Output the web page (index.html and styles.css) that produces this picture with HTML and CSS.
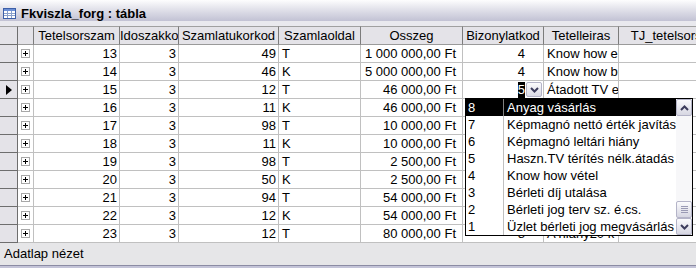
FILE: index.html
```html
<!DOCTYPE html>
<html lang="hu">
<head>
    <meta charset="UTF-8">
    <title>Fkviszla_forg : tábla</title>
    <link rel="stylesheet" href="styles.css">
</head>
<body>
    <div class="window">
        <div class="titlebar">
            <svg class="table-icon" width="13" height="11" viewBox="0 0 13 11">
                <rect x="0.5" y="0.5" width="12" height="10" fill="#fff" stroke="#3d5fa8"/>
                <rect x="1" y="1" width="11" height="2" fill="#6b8fd6"/>
                <path d="M1 5.5H12M1 7.5H12M4.5 3V10M8.5 3V10" stroke="#8aa0cc" stroke-width="1"/>
            </svg>
            <span class="title">Fkviszla_forg : tábla</span>
        </div>
        <div class="frame-gap"></div>

        <div class="sheet">
            <div class="row head">
                <div class="cell sel"></div>
                <div class="cell"></div>
                <div class="cell">Tetelsorszam</div>
                <div class="cell">Idoszakkod</div>
                <div class="cell">Szamlatukorkod</div>
                <div class="cell">Szamlaoldal</div>
                <div class="cell">Osszeg</div>
                <div class="cell">Bizonylatkod</div>
                <div class="cell">Tetelleiras</div>
                <div class="cell">TJ_tetelsorszam</div>
            </div>

            <div class="row">
                <div class="cell sel"></div>
                <div class="cell exp"><span class="plus"></span></div>
                <div class="cell num">13</div>
                <div class="cell num">3</div>
                <div class="cell num">49</div>
                <div class="cell txt">T</div>
                <div class="cell money">1 000 000,00 Ft</div>
                <div class="cell code">4</div>
                <div class="cell txt">Know how eladás</div>
                <div class="cell"></div>
            </div>
            <div class="row">
                <div class="cell sel"></div>
                <div class="cell exp"><span class="plus"></span></div>
                <div class="cell num">14</div>
                <div class="cell num">3</div>
                <div class="cell num">46</div>
                <div class="cell txt">K</div>
                <div class="cell money">5 000 000,00 Ft</div>
                <div class="cell code">4</div>
                <div class="cell txt">Know how bérlet</div>
                <div class="cell"></div>
            </div>
            <div class="row">
                <div class="cell sel current"><span class="arrow"></span></div>
                <div class="cell exp"><span class="plus"></span></div>
                <div class="cell num">15</div>
                <div class="cell num">3</div>
                <div class="cell num">12</div>
                <div class="cell txt">T</div>
                <div class="cell money">46 000,00 Ft</div>
                <div class="cell code combo"><span class="picked">5</span>
                    <span class="drop-btn">
                        <svg width="9" height="6" viewBox="0 0 9 6"><path d="M1 1L4.5 4.5L8 1" fill="none" stroke="#3c3c5c" stroke-width="2"/></svg>
                    </span>
                </div>
                <div class="cell txt">Átadott TV eladása</div>
                <div class="cell"></div>
            </div>
            <div class="row">
                <div class="cell sel"></div>
                <div class="cell exp"><span class="plus"></span></div>
                <div class="cell num">16</div>
                <div class="cell num">3</div>
                <div class="cell num">11</div>
                <div class="cell txt">K</div>
                <div class="cell money">46 000,00 Ft</div>
                <div class="cell code"></div>
                <div class="cell txt"></div>
                <div class="cell"></div>
            </div>
            <div class="row">
                <div class="cell sel"></div>
                <div class="cell exp"><span class="plus"></span></div>
                <div class="cell num">17</div>
                <div class="cell num">3</div>
                <div class="cell num">98</div>
                <div class="cell txt">T</div>
                <div class="cell money">10 000,00 Ft</div>
                <div class="cell code"></div>
                <div class="cell txt"></div>
                <div class="cell"></div>
            </div>
            <div class="row">
                <div class="cell sel"></div>
                <div class="cell exp"><span class="plus"></span></div>
                <div class="cell num">18</div>
                <div class="cell num">3</div>
                <div class="cell num">11</div>
                <div class="cell txt">K</div>
                <div class="cell money">10 000,00 Ft</div>
                <div class="cell code"></div>
                <div class="cell txt"></div>
                <div class="cell"></div>
            </div>
            <div class="row">
                <div class="cell sel"></div>
                <div class="cell exp"><span class="plus"></span></div>
                <div class="cell num">19</div>
                <div class="cell num">3</div>
                <div class="cell num">98</div>
                <div class="cell txt">T</div>
                <div class="cell money">2 500,00 Ft</div>
                <div class="cell code"></div>
                <div class="cell txt"></div>
                <div class="cell"></div>
            </div>
            <div class="row">
                <div class="cell sel"></div>
                <div class="cell exp"><span class="plus"></span></div>
                <div class="cell num">20</div>
                <div class="cell num">3</div>
                <div class="cell num">50</div>
                <div class="cell txt">K</div>
                <div class="cell money">2 500,00 Ft</div>
                <div class="cell code"></div>
                <div class="cell txt"></div>
                <div class="cell"></div>
            </div>
            <div class="row">
                <div class="cell sel"></div>
                <div class="cell exp"><span class="plus"></span></div>
                <div class="cell num">21</div>
                <div class="cell num">3</div>
                <div class="cell num">94</div>
                <div class="cell txt">T</div>
                <div class="cell money">54 000,00 Ft</div>
                <div class="cell code"></div>
                <div class="cell txt"></div>
                <div class="cell"></div>
            </div>
            <div class="row">
                <div class="cell sel"></div>
                <div class="cell exp"><span class="plus"></span></div>
                <div class="cell num">22</div>
                <div class="cell num">3</div>
                <div class="cell num">12</div>
                <div class="cell txt">K</div>
                <div class="cell money">54 000,00 Ft</div>
                <div class="cell code"></div>
                <div class="cell txt"></div>
                <div class="cell"></div>
            </div>
            <div class="row">
                <div class="cell sel"></div>
                <div class="cell exp"><span class="plus"></span></div>
                <div class="cell num">23</div>
                <div class="cell num">3</div>
                <div class="cell num">12</div>
                <div class="cell txt">T</div>
                <div class="cell money">80 000,00 Ft</div>
                <div class="cell code">8</div>
                <div class="cell txt">A hiány20 k</div>
                <div class="cell"></div>
            </div>

            <!-- open list of the Bizonylatkod combo -->
            <div class="combo-list">
                <div class="items">
                    <div class="item active"><span class="key">8</span><span class="label">Anyag vásárlás</span></div>
                    <div class="item"><span class="key">7</span><span class="label">Képmagnó nettó érték javítás</span></div>
                    <div class="item"><span class="key">6</span><span class="label">Képmagnó leltári hiány</span></div>
                    <div class="item"><span class="key">5</span><span class="label">Haszn.TV térítés nélk.átadás</span></div>
                    <div class="item"><span class="key">4</span><span class="label">Know how vétel</span></div>
                    <div class="item"><span class="key">3</span><span class="label">Bérleti díj utalása</span></div>
                    <div class="item"><span class="key">2</span><span class="label">Bérleti jog terv sz. é.cs.</span></div>
                    <div class="item"><span class="key">1</span><span class="label">Üzlet bérleti jog megvásárlás</span></div>
                </div>
                <div class="scrollbar">
                    <div class="sb-btn">
                        <svg width="9" height="6" viewBox="0 0 9 6"><path d="M1 5L4.5 1.5L8 5" fill="none" stroke="#3c3c5c" stroke-width="2"/></svg>
                    </div>
                    <div class="sb-track"></div>
                    <div class="sb-btn thumb">
                        <svg width="7" height="7" viewBox="0 0 7 7"><path d="M0 0.5H7M0 2.5H7M0 4.5H7M0 6.5H7" stroke="#9a9ab4" stroke-width="1"/></svg>
                    </div>
                    <div class="sb-btn">
                        <svg width="9" height="6" viewBox="0 0 9 6"><path d="M1 1L4.5 4.5L8 1" fill="none" stroke="#3c3c5c" stroke-width="2"/></svg>
                    </div>
                </div>
            </div>
        </div>

        <div class="statusbar">Adatlap nézet</div>
        <div class="bottom-edge"></div>
    </div>
</body>
</html>
```

FILE: styles.css
```css
body {
    margin: 0;
    width: 696px;
    height: 268px;
    overflow: hidden;
    background: #ffffff;
    font-family: "Liberation Sans", Arial, sans-serif;
    font-size: 13px;
    color: #000;
}
.window {
    display: flex;
    flex-direction: column;
    width: 696px;
    height: 268px;
}
.titlebar {
    height: 21px;
    box-sizing: border-box;
    display: flex;
    align-items: flex-start;
    padding: 6px 0 0 3px;
    background: linear-gradient(to bottom, #fdfdfe 0%, #e4e4ec 40%, #c2c2d4 100%);
}
.table-icon {
    margin-top: 2px;
    margin-right: 5px;
}
.title {
    font-weight: bold;
    line-height: 15px;
}
.frame-gap {
    height: 5px;
    background: #e9e9ee;
}
.sheet {
    position: relative;
    height: 217px;
    overflow: hidden;
    background: #fff;
}
.row {
    display: grid;
    grid-template-columns: 18px 16px 86px 59px 100px 82px 102px 81px 75px 120px;
    height: 18px;
}
.cell {
    box-sizing: border-box;
    height: 18px;
    border-right: 1px solid #c0c0c0;
    border-bottom: 1px solid #c0c0c0;
    line-height: 17px;
    white-space: nowrap;
    overflow: hidden;
    position: relative;
}
.row.head {
    height: 19px;
}
.head .cell {
    height: 19px;
    border-top: 1px solid #a0a0a0;
    border-bottom: 1px solid #9a9a9a;
    border-right: 1px solid #7c7c7c;
    background: #e4e3e8;
    text-align: center;
}
.cell.sel {
    background: #e4e3e8;
    border-right: 1px solid #6e6e6e;
    border-bottom: 1px solid #6e6e6e;
}
.num {
    text-align: right;
    padding-right: 2px;
}
.txt {
    padding-left: 3px;
}
.money {
    text-align: right;
    padding-right: 6px;
}
.code {
    text-align: right;
    padding-right: 18px;
}
.picked {
    background: #000;
    color: #fff;
    display: inline-block;
    height: 16px;
    line-height: 16px;
    margin-top: 1px;
    vertical-align: top;
}
.drop-btn {
    position: absolute;
    right: 1px;
    top: 1px;
    width: 16px;
    height: 15px;
    box-sizing: border-box;
    border: 1px solid #b4b4c8;
    border-radius: 2px;
    background: linear-gradient(to bottom, #fbfbfd, #d9d9e4);
    display: flex;
    align-items: center;
    justify-content: center;
}
.exp {
    display: flex;
    align-items: center;
    justify-content: center;
}
.plus {
    width: 9px;
    height: 9px;
    box-sizing: border-box;
    border: 1px solid #a8a8a8;
    background:
        linear-gradient(#000, #000) center / 5px 1px no-repeat,
        linear-gradient(#000, #000) center / 1px 5px no-repeat,
        #fff;
}
.sel.current {
    display: flex;
    align-items: center;
    padding-left: 6px;
}
.arrow {
    width: 0;
    height: 0;
    border-top: 5px solid transparent;
    border-bottom: 5px solid transparent;
    border-left: 6px solid #000;
}
.combo-list {
    position: absolute;
    left: 465px;
    top: 72px;
    width: 228px;
    height: 138px;
    box-sizing: border-box;
    border: 1px solid #000;
    background: #fff;
    display: flex;
}
.items {
    flex: 1;
}
.item {
    display: flex;
    height: 17px;
    line-height: 17px;
    white-space: nowrap;
    overflow: hidden;
}
.item .key {
    width: 38px;
    box-sizing: border-box;
    padding-left: 2px;
    border-right: 1px solid #c0c0c0;
    flex-shrink: 0;
}
.item .label {
    padding-left: 3px;
}
.item.active {
    background: #000;
    color: #fff;
}
.item.active .key {
    border-right-color: #808080;
}
.scrollbar {
    width: 16px;
    display: flex;
    flex-direction: column;
    background: #f7f7f9;
}
.sb-btn {
    height: 17px;
    box-sizing: border-box;
    border: 1px solid #b4b4c8;
    border-radius: 2px;
    background: linear-gradient(to bottom, #fbfbfd, #d6d6e2);
    display: flex;
    align-items: center;
    justify-content: center;
}
.sb-track {
    flex: 1;
}
.statusbar {
    height: 22px;
    line-height: 22px;
    padding-left: 4px;
    background: #e6e6e8;
}
.bottom-edge {
    height: 2px;
    border-top: 1px solid #8c8ca4;
    background: #c4c4d8;
}
```
